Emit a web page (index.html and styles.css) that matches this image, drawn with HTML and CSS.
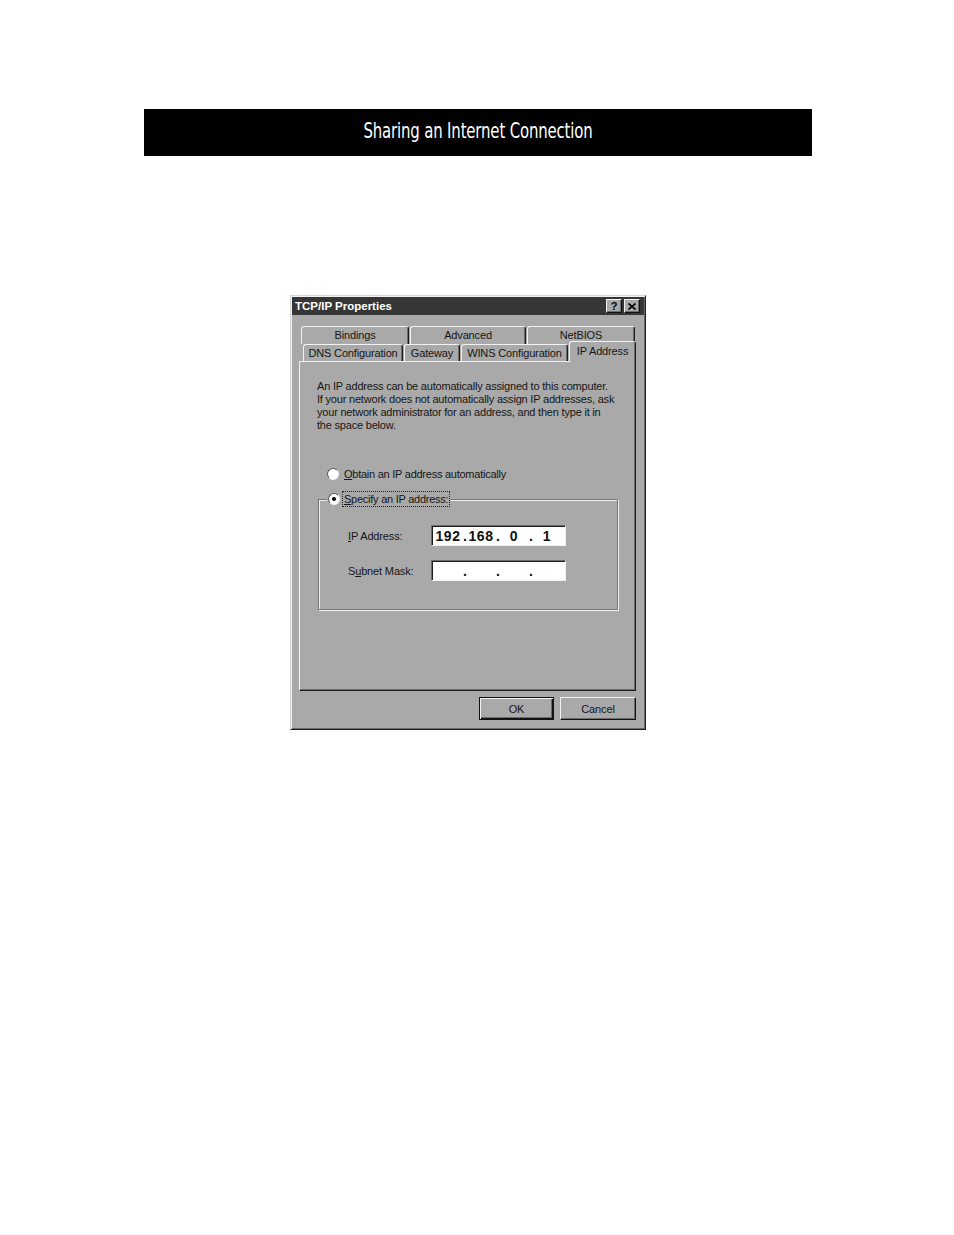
FILE: index.html
```html
<!DOCTYPE html>
<html>
<head>
<meta charset="utf-8">
<title>Sharing an Internet Connection</title>
<link rel="stylesheet" href="styles.css">
</head>
<body>
<div class="page">
  <div class="header"><h1 class="header-title">Sharing an Internet Connection</h1></div>

  <div class="dialog">
    <div class="titlebar">
      <span class="title-text">TCP/IP Properties</span>
      <div class="title-buttons">
        <span class="tbtn tbtn-help">?</span>
        <span class="tbtn tbtn-close">
          <svg width="8" height="7" viewBox="0 0 8 7"><path d="M0.5 0.5 L7.5 6.5 M7.5 0.5 L0.5 6.5" stroke="#000" stroke-width="1.6" fill="none"/></svg>
        </span>
      </div>
    </div>

    <div class="tabs">
      <div class="tabrow row1">
        <div class="tab t-bind">Bindings</div>
        <div class="tab t-adv">Advanced</div>
        <div class="tab t-net">NetBIOS</div>
      </div>
      <div class="tabrow row2">
        <div class="tab t-dns">DNS Configuration</div>
        <div class="tab t-gw">Gateway</div>
        <div class="tab t-wins">WINS Configuration</div>
        <div class="tab t-ip selected">IP Address</div>
      </div>
    </div>

    <div class="panel">
      <p class="intro">An IP address can be automatically assigned to this computer.<br>If your network does not automatically assign IP addresses, ask<br>your network administrator for an address, and then type it in<br>the space below.</p>

      <div class="radio-row first">
        <span class="radio"></span>
        <span class="radio-label"><u>O</u>btain an IP address automatically</span>
      </div>

      <div class="group">
        <div class="legend">
          <span class="radio checked"></span>
          <span class="radio-label focus"><u>S</u>pecify an IP address:</span>
        </div>
        <div class="field-row">
          <span class="field-label"><u>I</u>P Address:</span>
          <div class="ipbox">
            <span class="oct">192</span><span class="dot">.</span><span class="oct">168</span><span class="dot">.</span><span class="oct">0</span><span class="dot">.</span><span class="oct">1</span>
          </div>
        </div>
        <div class="field-row">
          <span class="field-label">S<u>u</u>bnet Mask:</span>
          <div class="ipbox">
            <span class="oct"></span><span class="dot">.</span><span class="oct"></span><span class="dot">.</span><span class="oct"></span><span class="dot">.</span><span class="oct"></span>
          </div>
        </div>
      </div>
    </div>

    <div class="buttons">
      <div class="btn default">OK</div>
      <div class="btn">Cancel</div>
    </div>
  </div>
</div>
</body>
</html>
```
FILE: styles.css
```css
body {
  margin: 0;
  background: #ffffff;
}

.page {
  padding-top: 109px;
}

.header {
  margin-left: 144px;
  width: 668px;
  height: 47px;
  background: #000;
  display: flex;
  align-items: center;
  justify-content: center;
}

.header-title {
  margin: 0 0 4px 0;
  color: #fff;
  font-family: "DejaVu Sans Condensed", "DejaVu Sans", sans-serif;
  font-stretch: condensed;
  font-size: 21px;
  font-weight: normal;
  letter-spacing: -0.2px;
  transform: scaleX(0.79);
  white-space: nowrap;
}

.dialog {
  margin: 139px 0 0 290px;
  width: 356px;
  height: 435px;
  box-sizing: border-box;
  background: #a9a9a9;
  border: 1px solid;
  border-color: #d4d4d4 #1c1c1c #1c1c1c #d4d4d4;
  box-shadow: inset 1px 1px 0 #f2f2f2, inset -1px -1px 0 #6c6c6c;
  padding: 1px;
  font-family: "Liberation Sans", Arial, sans-serif;
  font-size: 11px;
  letter-spacing: -0.15px;
  color: #161616;
}

.titlebar {
  height: 18px;
  background: #363636;
  display: flex;
  align-items: center;
  justify-content: space-between;
  padding: 0 4px 0 3px;
}

.title-text {
  color: #fff;
  font-weight: bold;
  font-size: 11.5px;
  letter-spacing: 0;
}

.title-buttons {
  display: flex;
  gap: 2px;
}

.tbtn {
  width: 16px;
  height: 14px;
  box-sizing: border-box;
  background: #a9a9a9;
  border: 1px solid;
  border-color: #f2f2f2 #111 #111 #f2f2f2;
  box-shadow: inset -1px -1px 0 #6c6c6c;
  display: flex;
  align-items: center;
  justify-content: center;
  font-weight: bold;
  font-size: 11px;
  color: #000;
  line-height: 1;
}

.tabs {
  margin-top: 11px;
}

.tabrow {
  display: flex;
  height: 18px;
}

.row1 {
  padding-left: 9px;
  gap: 1px;
}

.row2 {
  padding-left: 11px;
  height: 17px;
  gap: 1px;
  align-items: flex-end;
}

.tab {
  box-sizing: border-box;
  height: 18px;
  border: 1px solid;
  border-bottom: none;
  border-color: #f2f2f2 #1c1c1c transparent #f2f2f2;
  box-shadow: inset -1px 0 0 #6c6c6c;
  border-radius: 3px 3px 0 0;
  text-align: center;
  line-height: 17px;
  white-space: nowrap;
}

.row2 .tab {
  height: 17px;
  line-height: 16px;
}

.t-bind { width: 108px; }
.t-adv  { width: 116px; }
.t-net  { width: 108px; }
.t-dns  { width: 100px; }
.t-gw   { width: 56px; }
.t-wins { width: 107px; }

.row2 .t-ip.selected {
  width: 67px;
  height: 21px;
  margin-bottom: -1px;
  background: #a9a9a9;
  line-height: 18px;
  position: relative;
  z-index: 1;
}

.panel {
  margin-left: 7px;
  width: 337px;
  height: 330px;
  box-sizing: border-box;
  border: 1px solid;
  border-color: #f2f2f2 #1c1c1c #1c1c1c #f2f2f2;
  box-shadow: inset -1px -1px 0 #6c6c6c;
  padding: 18px 17px 0 17px;
}

.intro {
  margin: 0;
  line-height: 13px;
  font-size: 11px;
  letter-spacing: -0.2px;
}

.radio-row {
  display: flex;
  align-items: center;
  height: 16px;
}

.radio-row.first {
  margin-top: 34px;
  margin-left: 10px;
}

.radio {
  width: 12px;
  height: 12px;
  box-sizing: border-box;
  border-radius: 50%;
  background: #fff;
  border: 1px solid;
  border-color: #5a5a5a #f2f2f2 #f2f2f2 #5a5a5a;
  display: flex;
  align-items: center;
  justify-content: center;
  flex: none;
}

.radio.checked::after {
  content: "";
  width: 4px;
  height: 4px;
  border-radius: 50%;
  background: #000;
}

.radio-label {
  margin-left: 5px;
  line-height: 14px;
  letter-spacing: -0.25px;
}

.radio-label.focus {
  margin-left: 3px;
  padding: 0 1px 0 1px;
  outline: 1px dotted #222;
  outline-offset: 0;
}

.group {
  margin-top: 17px;
  margin-left: 1px;
  width: 300px;
  height: 111px;
  box-sizing: border-box;
  border: 1px solid #767676;
  box-shadow: inset 1px 1px 0 #efefef, 1px 1px 0 #efefef;
  padding-left: 29px;
}

.legend {
  display: flex;
  align-items: center;
  width: fit-content;
  height: 16px;
  margin-top: -9px;
  margin-left: -21px;
  padding: 0 2px 0 1px;
  background: #a9a9a9;
  margin-bottom: 18px;
}

.field-row {
  display: flex;
  align-items: center;
  height: 21px;
  margin-bottom: 14px;
}

.field-label {
  width: 83px;
  flex: none;
}

.ipbox {
  width: 135px;
  height: 21px;
  box-sizing: border-box;
  background: #fff;
  border: 1px solid;
  border-color: #6c6c6c #f2f2f2 #f2f2f2 #6c6c6c;
  box-shadow: inset 1px 1px 0 #1c1c1c;
  display: flex;
  align-items: center;
  padding-left: 1px;
  font-size: 14px;
  font-weight: bold;
  color: #111;
}

.oct {
  width: 30px;
  text-align: center;
  letter-spacing: 0.5px;
}

.dot {
  width: 3px;
  text-align: center;
}

.buttons {
  display: flex;
  justify-content: flex-end;
  gap: 6px;
  margin-top: 6px;
  padding-right: 8px;
}

.btn {
  width: 76px;
  height: 23px;
  box-sizing: border-box;
  border: 1px solid;
  border-color: #f2f2f2 #111 #111 #f2f2f2;
  box-shadow: inset -1px -1px 0 #6c6c6c;
  display: flex;
  align-items: center;
  justify-content: center;
}

.btn.default {
  width: 75px;
  border: 1px solid #111;
  box-shadow: inset 1px 1px 0 #f2f2f2, inset -1px -1px 0 #111, inset -2px -2px 0 #6c6c6c;
}
```
